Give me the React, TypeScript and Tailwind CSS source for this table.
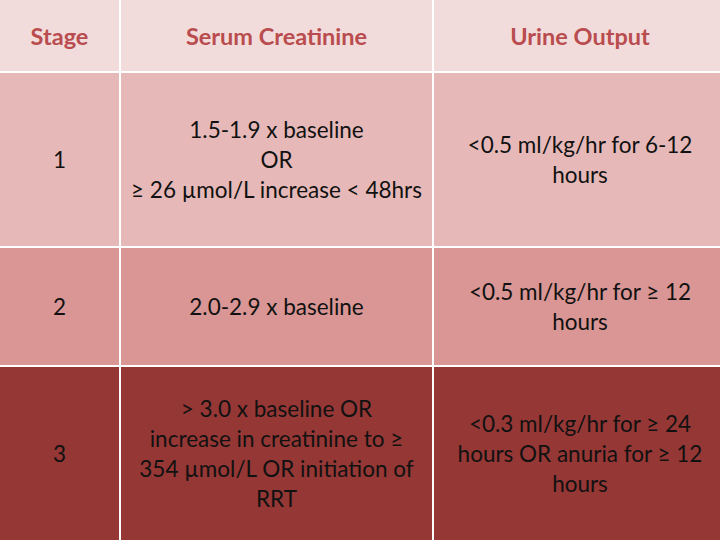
import { Fragment } from 'react'

const rows = [
  {
    stage: '1',
    bg: 'bg-[#e6b9b8]',
    serum: ['1.5-1.9 x baseline', 'OR', '≥ 26 µmol/L increase < 48hrs'],
    urine: ['<0.5 ml/kg/hr for 6-12', 'hours'],
  },
  {
    stage: '2',
    bg: 'bg-[#d99694]',
    serum: ['2.0-2.9 x baseline'],
    urine: ['<0.5 ml/kg/hr for ≥ 12', 'hours'],
  },
  {
    stage: '3',
    bg: 'bg-[#953735]',
    serum: ['> 3.0 x baseline OR', 'increase in creatinine to ≥', '354 µmol/L OR initiation of', 'RRT'],
    urine: ['<0.3 ml/kg/hr for ≥ 24', 'hours OR anuria for ≥ 12', 'hours'],
  },
]

function Lines({ lines }: { lines: string[] }) {
  return (
    <div className="text-center">
      {lines.map((l, i) => (
        <div key={i} className="whitespace-nowrap">{l}</div>
      ))}
    </div>
  )
}

export default function App() {
  return (
    <div
      className="w-[720px] h-[540px] bg-white grid grid-cols-[119px_311px_1fr] grid-rows-[71px_173px_117px_173px] gap-[2px] text-[22.5px] leading-[30px] text-[#111]"
      style={{ fontFamily: 'Lato, "Open Sans", sans-serif' }}
    >
      <div className="bg-[#f2dcdb] flex items-center justify-center font-bold text-[23.5px] text-[#b94c4e]">Stage</div>
      <div className="bg-[#f2dcdb] flex items-center justify-center font-bold text-[23.5px] text-[#b94c4e]">Serum Creatinine</div>
      <div className="bg-[#f2dcdb] flex items-center justify-center pl-[6px] font-bold text-[23.5px] text-[#b94c4e]">Urine Output</div>
      {rows.map((r) => (
        <Fragment key={r.stage}>
          <div className={`${r.bg} flex items-center justify-center`}>{r.stage}</div>
          <div className={`${r.bg} flex items-center justify-center`}>
            <Lines lines={r.serum} />
          </div>
          <div className={`${r.bg} flex items-center justify-center pl-[6px]`}>
            <Lines lines={r.urine} />
          </div>
        </Fragment>
      ))}
    </div>
  )
}
